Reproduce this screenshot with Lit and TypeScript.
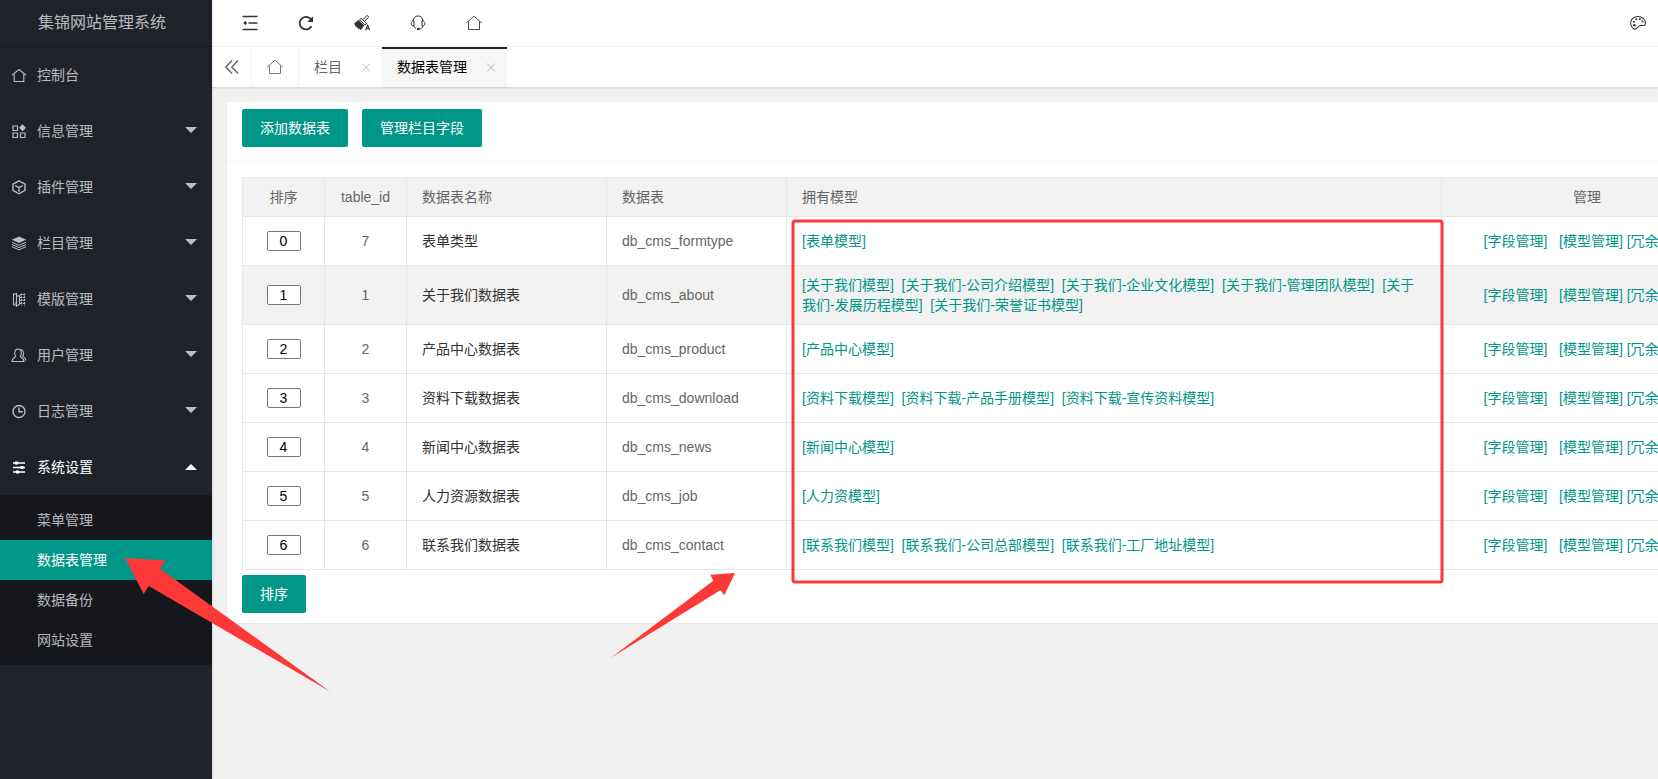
import { LitElement, html, svg, css, nothing } from "lit";
import { customElement, state } from "lit/decorators.js";
import { classMap } from "lit/directives/class-map.js";

interface MenuItem {
  icon: string;
  label: string;
  children?: string[];
}

interface TableRow {
  id: number;
  name: string;
  table: string;
  models: string[];
}

const MENU: MenuItem[] = [
  { icon: "home", label: "控制台" },
  { icon: "component", label: "信息管理", children: [] },
  { icon: "cube", label: "插件管理", children: [] },
  { icon: "layers", label: "栏目管理", children: [] },
  { icon: "template", label: "模版管理", children: [] },
  { icon: "user", label: "用户管理", children: [] },
  { icon: "clock", label: "日志管理", children: [] },
  {
    icon: "sliders",
    label: "系统设置",
    children: ["菜单管理", "数据表管理", "数据备份", "网站设置"],
  },
];

const ROWS: TableRow[] = [
  { id: 7, name: "表单类型", table: "db_cms_formtype", models: ["表单模型"] },
  {
    id: 1,
    name: "关于我们数据表",
    table: "db_cms_about",
    models: [
      "关于我们模型",
      "关于我们-公司介绍模型",
      "关于我们-企业文化模型",
      "关于我们-管理团队模型",
      "关于我们-发展历程模型",
      "关于我们-荣誉证书模型",
    ],
  },
  { id: 2, name: "产品中心数据表", table: "db_cms_product", models: ["产品中心模型"] },
  {
    id: 3,
    name: "资料下载数据表",
    table: "db_cms_download",
    models: ["资料下载模型", "资料下载-产品手册模型", "资料下载-宣传资料模型"],
  },
  { id: 4, name: "新闻中心数据表", table: "db_cms_news", models: ["新闻中心模型"] },
  { id: 5, name: "人力资源数据表", table: "db_cms_job", models: ["人力资模型"] },
  {
    id: 6,
    name: "联系我们数据表",
    table: "db_cms_contact",
    models: ["联系我们模型", "联系我们-公司总部模型", "联系我们-工厂地址模型"],
  },
];

const ICONS: Record<string, unknown> = {
  home: svg`<path d="M1 8.100 8 2.500l7 5.600M3.200 7V14.500h9.600V7" stroke-width="1.100"/>`,
  house: svg`<path d="M.2 8.100 8 1.200l7.800 6.900M2.500 6.500v8h11v-8" stroke-width=".9"/>`,
  component: svg`<path d="M2 3h4.500v4.500H2zM2 10h4.500v4.500H2zM9.500 10H14v4.500H9.500z" stroke-width="1.200"/><path class="solid" d="M11.500 1.200 15 4.700 11.500 8.200 8 4.700z"/>`,
  cube: svg`<path d="M8 1.800 14 5.200v6.200L8 14.800 2 11.400V5.200zM4.200 6.500 8 8.700l3.800-2.200M8 8.700v4" stroke-width="1.400"/>`,
  layers: svg`<path class="solid" d="M8 1.500 15.200 4.700 8 8 .8 4.700z"/><path d="M1 7.200 8 10.300l7-3.100M1 9.500l7 3.100 7-3.100M1 11.700l7 3.100 7-3.100" stroke-width="1"/>`,
  template: svg`<path d="M5.500 3H2.500v11h3M5.500 2v13l3-1.500v-9L5.500 5.500M5.500 12H4" stroke-width="1.100"/><path d="M10.500 2.500v12M13.500 2.500v12M9 3.500h5M9 6.500h5M9 9.500h5M9 12.500h5" stroke-width="1.200" stroke-dasharray="2 .8"/>`,
  user: svg`<path d="M4.700 9.300C3 7.500 3.200 2 7 2s4 5.500 2.300 7.300c0 1 3.500 1.200 3.700 5.200H1c.2-4 3.700-4.200 3.700-5.200zM10 2.500c3 .3 3.200 4.800 1.600 6.500.2.900 3 1.500 3.300 4.500" stroke-width="1.100"/>`,
  clock: svg`<circle cx="8" cy="8.500" r="6" stroke-width="1.400"/><path d="M8 4.500v4.300h3.800" stroke-width="1.400"/>`,
  sliders: svg`<path d="M2 4h12M2 8.500h12M2 13h12" stroke-width="1.400"/><path class="solid" d="M4 2.500h3v3H4zM9.500 7h3v3h-3zM5 11.500h3v3H5z"/>`,
  shrink: svg`<path d="M.5 1.500h15M6.500 8h9M.5 14.500h15" stroke-width="1.500"/><path d="M2 8h3" stroke-width="1.200"/><path class="solid" d="M1 8 4 5.800v4.400z"/>`,
  refresh: svg`<path d="M13.500 11.200A6.300 6.300 0 1 1 12.600 3.800" stroke-width="1.800"/><path class="solid" d="M15 1.200V7H9.300z"/>`,
  brush: svg`<path class="solid" d="M.2 8.300 4.600 5l5.600 5.600-3.700 4.600-1.300-1.700-.4 1-1.200-2-.6.8-.9-2.200-.7.300z"/><path d="m5.500 4.700 1.800-1.300 5.200 5-1.500 1.800zM9 4.500l3.500-3.600c1-.9 2.600.5 1.700 1.600L10.700 6.300" stroke-width="1"/><path d="m11.600 15.300 2-5 2 5M12.300 13.700h2.600" stroke-width="1.100"/>`,
  headset: svg`<path d="M3 6C3.200-.7 12.800-.7 13 6M4 6v4.800H2.700C.8 10.400.6 6.700 2.700 6zM12 6v4.800h1.300c1.900-.4 2.100-4.100 0-4.800zM12.800 11c0 2-1.500 2.900-3.600 3M3.700 11.200c.4 1 1.200 1.900 2.300 2.200" stroke-width="1"/><circle class="solid" cx="8.200" cy="14" r="1.300"/>`,
  palette: svg`<path d="M3.600 13.700C.5 11.500-.3 7.200 2 4.200 4.600 1 10.200.7 13.200 3.300c2 1.700 2.700 4.500 1.700 6.800-1 .9-2.500.2-3.900.2-1.600.1-2.500 1-3.400 2.100-1 1.300-2.500 2.400-4 1.300z" stroke-width="1.100"/><g class="solid"><circle cx="4.400" cy="10.200" r="1.200"/><circle cx="4" cy="6.800" r="1"/><circle cx="6.300" cy="4.200" r="1"/><circle cx="9.800" cy="4" r="1"/><circle cx="12.600" cy="6.600" r="1"/></g>`,
  prev: svg`<path d="M8 1.500 1.800 8 8 14.500M14 1.500 7.800 8l6.200 6.500" stroke-width="1.400"/>`,
  close: svg`<path d="m4 4.500 8 8M12 4.500l-8 8" stroke-width="1"/>`,
};

const icon = (name: string) =>
  html`<svg class="icon" viewBox="0 0 16 16" aria-hidden="true">${ICONS[name]}</svg>`;

@customElement("app-root")
export class AppRoot extends LitElement {
  @state() private openMenu = "系统设置";
  @state() private current = "数据表管理";

  static styles = css`
    :host {
      display: flex;
      position: relative;
      min-height: 100vh;
      overflow: hidden;
      font: 14px/20px "Liberation Sans", Arial, "Noto Sans CJK SC", sans-serif;
      color: #666;
      background: #f1f1f1;
    }
    *, *::before, *::after { box-sizing: border-box; }
    a { color: inherit; text-decoration: none; }
    button { font: inherit; color: inherit; border: 0; background: none; padding: 0; cursor: pointer; }
    ul { list-style: none; margin: 0; padding: 0; }
    .icon { width: 16px; height: 16px; flex: none; fill: none; stroke: currentColor; overflow: visible; }
    .solid { fill: currentColor; stroke: none; }

    .side {
      flex: none;
      width: 212px;
      background: #20222a;
      color: rgba(255, 255, 255, 0.7);
      box-shadow: 1px 0 2px rgba(0, 0, 0, 0.1);
      z-index: 1;
    }
    .logo {
      height: 47px;
      padding: 0 8px 2px 0;
      line-height: 45px;
      font-size: 16px;
      text-align: center;
      box-shadow: inset 0 -1px 1px rgba(0, 0, 0, 0.2);
    }
    .entry {
      display: flex;
      align-items: center;
      gap: 10px;
      width: 100%;
      height: 56px;
      padding: 0 15px 0 11px;
      text-align: left;
    }
    .entry .label { flex: 1; }
    .entry.open { color: #fff; }
    .caret {
      margin-bottom: 2px;
      border: 6px solid transparent;
      border-top-color: currentColor;
      border-bottom-width: 0;
    }
    .open .caret { margin: 0; border-top-width: 0; border-bottom: 6px solid currentColor; }
    .sub { padding: 5px 0; background: rgba(0, 0, 0, 0.3); }
    .sub a { display: block; padding: 0 37px; line-height: 40px; }
    .sub a.active { background: #009688; color: #fff; }

    .main { flex: 1; min-width: 0; }
    .header {
      display: flex;
      justify-content: space-between;
      height: 47px;
      padding: 0 0 0 10px;
      background: #fff;
      border-bottom: 1px solid #f4f4f4;
      color: #333;
    }
    .tools { display: flex; }
    .tool { display: grid; place-items: center; width: 56px; }
    .tool.last { width: 40px; }

    .tabs {
      display: flex;
      height: 40px;
      background: #fff;
      box-shadow: 0 1px 2px rgba(0, 0, 0, 0.15);
      position: relative;
    }
    .tab {
      display: flex;
      align-items: center;
      gap: 16px;
      padding: 0 8px 0 15px;
    }
    .tab.square { border-right: 1px solid #f4f4f4; }
    .tab.square.prev { width: 40px; padding: 0 12px; }
    .tab.square.start { width: 47px; }
    .tab .close { display: grid; color: #bbb; }
    .tab.current {
      background: #f6f6f6;
      color: #000;
      box-shadow: inset 0 2px #20222a;
    }

    .card {
      min-width: 1521px;
      margin: 15px;
      background: #fff;
      border-radius: 2px;
      box-shadow: 0 1px 2px rgba(0, 0, 0, 0.05);
    }
    .card-head {
      display: flex;
      gap: 14px;
      padding: 7px 15px 14px;
      border-bottom: 1px solid #f6f6f6;
    }
    .card-body { padding: 15px 15px 10px; }
    .btn {
      height: 38px;
      padding: 0 18px;
      border-radius: 2px;
      background: #009688;
      color: #fff;
    }
    .grid {
      width: 100%;
      margin-bottom: 5px;
      table-layout: fixed;
      border-collapse: collapse;
    }
    th, td {
      padding: 9px 15px;
      border: 1px solid #e6e6e6;
      font-weight: 400;
      text-align: left;
    }
    th { background: #f2f2f2; }
    td { height: 49px; }
    .mid { text-align: center; }
    .actions { white-space: pre; text-align: center; }
    .striped { background: #f2f2f2; }
    .name { color: #333; }
    .c-order, .c-id { width: 82px; }
    .c-name { width: 200px; }
    .c-table { width: 180px; }
    .c-manage { width: 291px; }
    td a { color: #009688; }
    .order {
      display: block;
      width: 34px;
      height: 20px;
      margin: 0 auto;
      padding: 0;
      border: 1px solid #767676;
      border-radius: 2px;
      background: #fff;
      color: #000;
      font: inherit;
      text-align: center;
    }
    .marks {
      position: absolute;
      inset: 0;
      width: 100%;
      height: 100%;
      pointer-events: none;
      z-index: 2;
    }
    .arrow { fill: #fd3838; }
    .frame { fill: none; stroke: #fd3838; stroke-width: 3; }
  `;

  private renderEntry(item: MenuItem) {
    if (!item.children) {
      return html`<li><a class="entry" href="#">${icon(item.icon)}<span class="label">${item.label}</span></a></li>`;
    }
    const open = this.openMenu === item.label;
    return html`<li>
      <button
        class=${classMap({ entry: true, open })}
        aria-expanded=${open ? "true" : "false"}
        @click=${() => (this.openMenu = open ? "" : item.label)}
      >
        ${icon(item.icon)}<span class="label">${item.label}</span><span class="caret"></span>
      </button>
      ${open && item.children.length
        ? html`<div class="sub">
            ${item.children.map(
              (c) => html`<a
                href="#"
                class=${classMap({ active: c === this.current })}
                @click=${() => (this.current = c)}
                >${c}</a
              >`
            )}
          </div>`
        : nothing}
    </li>`;
  }

  private renderRow(row: TableRow, index: number) {
    return html`<tr class=${classMap({ striped: index === 1 })}>
      <td><input class="order" type="text" aria-label="${row.name}排序" .value=${String(index)} /></td>
      <td class="mid">${row.id}</td>
      <td class="name">${row.name}</td>
      <td>${row.table}</td>
      <td>${row.models.map((m) => html`<a href="#">[${m}]</a>&nbsp; `)}</td>
      <td class="actions"><a href="#">[字段管理]</a>   <a href="#">[模型管理]</a> <a href="#">[冗余字段]</a></td>
    </tr>`;
  }

  render() {
    return html`
      <nav class="side">
        <div class="logo">集锦网站管理系统</div>
        <ul>${MENU.map((m) => this.renderEntry(m))}</ul>
      </nav>
      <div class="main">
        <header class="header">
          <div class="tools">
            <button class="tool" aria-label="侧边伸缩">${icon("shrink")}</button>
            <button class="tool" aria-label="刷新">${icon("refresh")}</button>
            <button class="tool" aria-label="清理缓存">${icon("brush")}</button>
            <button class="tool" aria-label="客服">${icon("headset")}</button>
            <button class="tool" aria-label="网站首页">${icon("house")}</button>
          </div>
          <button class="tool last" aria-label="主题">${icon("palette")}</button>
        </header>
        <div class="tabs">
          <button class="tab square prev" aria-label="向左">${icon("prev")}</button>
          <a class="tab square start" href="#" aria-label="首页">${icon("house")}</a>
          <div class="tab">
            <a href="#">栏目</a><button class="close" aria-label="关闭栏目">${icon("close")}</button>
          </div>
          <div class="tab current">
            <a href="#">数据表管理</a><button class="close" aria-label="关闭数据表管理">${icon("close")}</button>
          </div>
        </div>
        <section class="card">
          <div class="card-head">
            <button class="btn">添加数据表</button>
            <button class="btn">管理栏目字段</button>
          </div>
          <div class="card-body">
            <table class="grid">
              <thead>
                <tr>
                  <th class="mid c-order">排序</th>
                  <th class="mid c-id">table_id</th>
                  <th class="c-name">数据表名称</th>
                  <th class="c-table">数据表</th>
                  <th>拥有模型</th>
                  <th class="mid c-manage">管理</th>
                </tr>
              </thead>
              <tbody>${ROWS.map((r, i) => this.renderRow(r, i))}</tbody>
            </table>
            <button class="btn">排序</button>
          </div>
        </section>
      </div>
      <svg class="marks" aria-hidden="true">
        <rect class="frame" x="793" y="221" width="649" height="361" rx="2" />
        <path class="arrow" d="M125 558 165.300 560.300 160 568.700 330 691.500 148.700 586 143.700 594z" />
        <path class="arrow" d="M735 573 710.300 574.700 713.300 580.700 611 657.700 720.300 590.300 724.300 595.300z" />
      </svg>
    `;
  }
}
